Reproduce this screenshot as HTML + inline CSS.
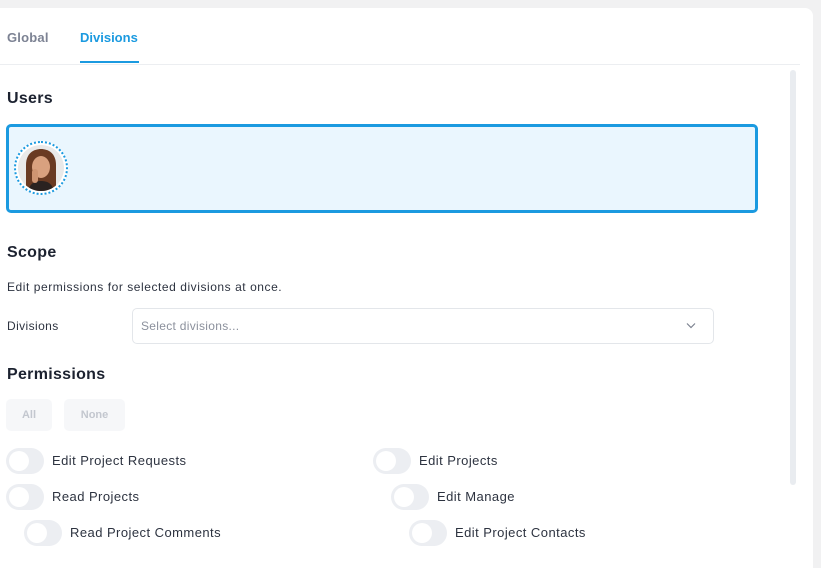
<!DOCTYPE html>
<html><head><style>
*{margin:0;padding:0;box-sizing:border-box}
body{width:821px;height:551px;background:#f1f1f2;font-family:"Liberation Sans",sans-serif;position:relative;overflow:hidden;color:#1f2533}
.card{position:absolute;left:0;top:8px;width:813px;height:560px;background:#fff;border-radius:0 8px 0 0}
.a{position:absolute;white-space:nowrap}
.tog{position:absolute;width:38px;height:26px;border-radius:13px;background:#eceef2}
.tog:after{content:"";position:absolute;left:3px;top:3px;width:20px;height:20px;border-radius:50%;background:#fff}
.lbl{position:absolute;font-size:13px;color:#2d3340;white-space:nowrap;letter-spacing:0.45px}
h2{position:absolute;font-size:16px;font-weight:bold;color:#1c2230;letter-spacing:0.3px}
</style></head><body>
<div class="card"></div>
<div class="a" style="left:7px;top:30px;font-size:13px;font-weight:bold;color:#7c8293;letter-spacing:0.2px">Global</div>
<div class="a" style="left:80px;top:30px;font-size:13px;font-weight:bold;color:#1b9ae0">Divisions</div>
<div class="a" style="left:80px;top:61px;width:59px;height:2px;background:#1b9ae0"></div>
<div class="a" style="left:0;top:64px;width:800px;height:1px;background:#eceef1"></div>
<div class="a" style="left:790px;top:70px;width:6px;height:415px;border-radius:3px;background:#e9ecf0"></div>
<h2 style="left:7px;top:90px">Users</h2>
<div class="a" style="left:6px;top:124px;width:752px;height:89px;border:3px solid #1b9ae0;border-radius:5px;background:#eaf6fe"></div>
<div class="a" style="left:14px;top:141px;width:54px;height:54px;border-radius:50%;border:2px dotted #1b9ae0;background:#fff;padding:2px">
<svg width="46" height="46" viewBox="0 0 46 46"><defs><clipPath id="c"><circle cx="23" cy="23" r="23"/></clipPath></defs><g clip-path="url(#c)"><rect width="46" height="46" fill="#e9e9e9"/><path d="M8 46V20C8 8 16 4 23 4s15 4 15 16v26z" fill="#6a3a22"/><ellipse cx="23" cy="22" rx="9" ry="11" fill="#d9a17f"/><path d="M10 46c2-8 7-10 13-10s11 2 13 10z" fill="#2a2220"/><rect x="14" y="24" width="6" height="14" rx="3" fill="#cf9572"/></g></svg></div>
<h2 style="left:7px;top:244px">Scope</h2>
<div class="a" style="left:7px;top:280px;font-size:12px;color:#2d3340;letter-spacing:0.55px">Edit permissions for selected divisions at once.</div>
<div class="a" style="left:7px;top:319px;font-size:12px;color:#2d3340;letter-spacing:0.4px">Divisions</div>
<div class="a" style="left:132px;top:308px;width:582px;height:36px;border:1px solid #e3e6ea;border-radius:5px"></div>
<div class="a" style="left:141px;top:319px;font-size:12px;color:#8b909c;letter-spacing:0.3px">Select divisions...</div>
<svg class="a" style="left:686px;top:322px" width="10" height="7" viewBox="0 0 10 7"><path d="M1 1.5l4 4 4-4" fill="none" stroke="#7c8290" stroke-width="1.2"/></svg>
<h2 style="left:7px;top:366px">Permissions</h2>
<div class="a" style="left:6px;top:399px;width:46px;height:32px;border-radius:5px;background:#f6f7f9;color:#c3c7cf;font-size:11px;font-weight:bold;text-align:center;line-height:32px">All</div>
<div class="a" style="left:64px;top:399px;width:61px;height:32px;border-radius:5px;background:#f6f7f9;color:#c3c7cf;font-size:11px;font-weight:bold;text-align:center;line-height:32px">None</div>
<div class="tog" style="left:6px;top:448px"></div><div class="lbl" style="left:52px;top:453px">Edit Project Requests</div>
<div class="tog" style="left:6px;top:484px"></div><div class="lbl" style="left:52px;top:489px">Read Projects</div>
<div class="tog" style="left:24px;top:520px"></div><div class="lbl" style="left:70px;top:525px">Read Project Comments</div>
<div class="tog" style="left:373px;top:448px"></div><div class="lbl" style="left:419px;top:453px">Edit Projects</div>
<div class="tog" style="left:391px;top:484px"></div><div class="lbl" style="left:437px;top:489px">Edit Manage</div>
<div class="tog" style="left:409px;top:520px"></div><div class="lbl" style="left:455px;top:525px">Edit Project Contacts</div>
</body></html>
